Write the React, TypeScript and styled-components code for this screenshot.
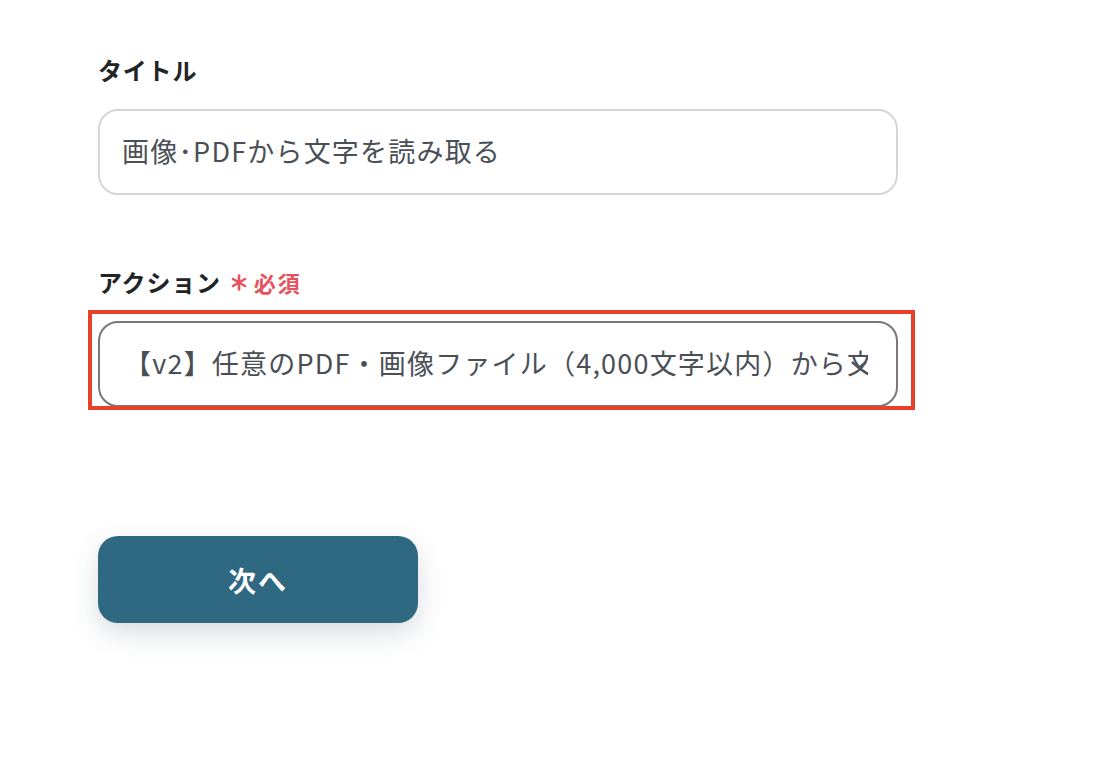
import React from "react";
import styled, { createGlobalStyle } from "styled-components";

const Global = createGlobalStyle`
  html, body { margin: 0; padding: 0; background: #ffffff; }
  body { font-family: "Noto Sans CJK JP", "Noto Sans", sans-serif; }
`;

const Page = styled.div`
  display: flex;
  flex-direction: column;
  padding: 54px 0 140px 98px;
  width: 800px;
`;

const Field = styled.div<{ $gap?: number }>`
  display: flex;
  flex-direction: column;
  gap: 23px;
  margin-bottom: ${(p) => p.$gap ?? 0}px;
`;

const Label = styled.div`
  display: flex;
  align-items: center;
  gap: 10px;
  font-size: 24px;
  line-height: 32px;
  font-weight: 700;
  color: #222426;
  letter-spacing: 0.8px;
`;

const Required = styled.span`
  display: inline-flex;
  align-items: center;
  gap: 7px;
  color: #e5535e;
  font-size: 22px;
  font-weight: 700;
  letter-spacing: 2px;
`;

const Input = styled.div`
  box-sizing: border-box;
  height: 86px;
  border: 2px solid #d3d6d9;
  border-radius: 20px;
  padding: 0 22px 3px;
  display: flex;
  align-items: center;
  font-size: 27px;
  color: #4a4f56;
  letter-spacing: 1.2px;
`;

const SelectWrap = styled.div`
  position: relative;
`;

const Select = styled.div`
  box-sizing: border-box;
  height: 86px;
  border: 2px solid #787878;
  border-radius: 20px;
  padding: 0 28px 3px 24px;
  display: flex;
  align-items: center;
  font-size: 27px;
  color: #4a4f56;
  white-space: nowrap;
  overflow: hidden;
  letter-spacing: 1.2px;
`;

const SelectText = styled.span`
  overflow: hidden;
  display: block;
  width: 100%;
`;

const Chevron = styled.svg`
  position: absolute;
  right: 30px;
  top: 38px;
`;

const Highlight = styled.div`
  position: absolute;
  left: -10px;
  right: -17px;
  top: -11px;
  bottom: -3px;
  border: 4.5px solid #e8412a;
  pointer-events: none;
`;

const Button = styled.button`
  width: 320px;
  height: 87px;
  border: none;
  border-radius: 20px;
  background: #2f6881;
  color: #ffffff;
  font-family: "Noto Sans CJK JP", sans-serif;
  font-size: 28px;
  font-weight: 700;
  letter-spacing: 2px;
  box-shadow: 0 10px 26px rgba(40, 60, 70, 0.18);
  cursor: pointer;
`;

export default function App() {
  return (
    <>
      <Global />
      <Page>
        <Field $gap={71}>
          <Label>タイトル</Label>
          <Input>画像･PDFから文字を読み取る</Input>
        </Field>
        <Field $gap={129}>
          <Label>
            アクション
            <Required>
              <svg width="16" height="17" viewBox="0 0 16 17">
                <g stroke="#e5535e" strokeWidth="2.6" strokeLinecap="round">
                  <line x1="8" y1="1.5" x2="8" y2="15.5" />
                  <line x1="2" y1="5" x2="14" y2="12" />
                  <line x1="2" y1="12" x2="14" y2="5" />
                </g>
              </svg>
              必須
            </Required>
          </Label>
          <SelectWrap>
            <Select>
              <SelectText>【v2】任意のPDF・画像ファイル（4,000文字以内）から文字を読み取る</SelectText>
            </Select>
            <Chevron width="18" height="12" viewBox="0 0 18 12">
              <polyline points="2,3 9,9 16,3" fill="none" stroke="#555" strokeWidth="2.6" />
            </Chevron>
            <Highlight />
          </SelectWrap>
        </Field>
        <div>
          <Button>次へ</Button>
        </div>
      </Page>
    </>
  );
}
